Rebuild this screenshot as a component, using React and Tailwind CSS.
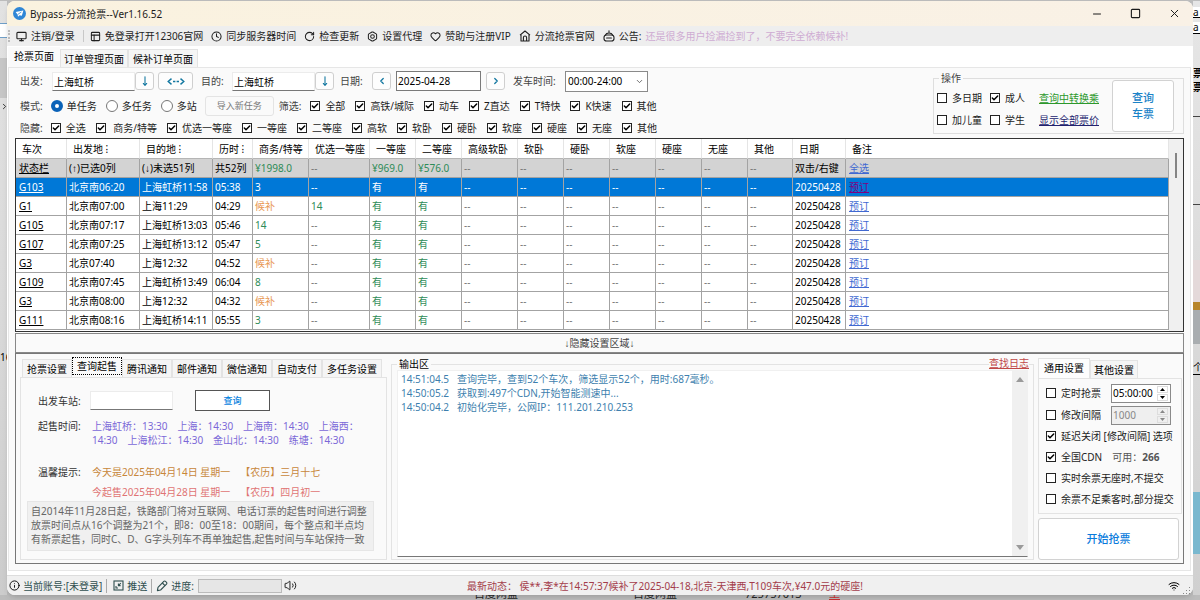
import React, { useState } from 'react';
import {
  Bolt,
  Check,
  ChevronDown,
  ChevronLeft,
  ChevronRight,
  Clock,
  Heart,
  Info,
  Minus,
  Monitor,
  MoveDown,
  PanelsTopLeft,
  RotateCw,
  Square,
  Volume2,
  Wifi,
  X
} from 'lucide-react';

const COLUMNS = [
  { name: '车次', width: 'w-[51px]' },
  { name: '出发地 ⁝', width: 'w-[73px]' },
  { name: '目的地 ⁝', width: 'w-[73px]' },
  { name: '历时 ⁝', width: 'w-[40px]' },
  { name: '商务/特等', width: 'w-[56px]' },
  { name: '优选一等座', width: 'w-[61px]' },
  { name: '一等座', width: 'w-[46px]' },
  { name: '二等座', width: 'w-[46px]' },
  { name: '高级软卧', width: 'w-[56px]' },
  { name: '软卧', width: 'w-[46px]' },
  { name: '硬卧', width: 'w-[46px]' },
  { name: '软座', width: 'w-[46px]' },
  { name: '硬座', width: 'w-[46px]' },
  { name: '无座', width: 'w-[46px]' },
  { name: '其他', width: 'w-[45px]' },
  { name: '日期', width: 'w-[53px]' },
  { name: '备注', width: '' }
];

const TRAINS = [
  ['状态栏', '(↑)已选0列', '(↓)未选51列', '共52列', '¥1998.0', '--', '¥969.0', '¥576.0'],
  ['G103', '北京南06:20', '上海虹桥11:58', '05:38', '3', '--', '有', '有'],
  ['G1', '北京南07:00', '上海11:29', '04:29', '候补', '14', '有', '有'],
  ['G105', '北京南07:17', '上海虹桥13:03', '05:46', '14', '--', '有', '有'],
  ['G107', '北京南07:25', '上海虹桥13:12', '05:47', '5', '--', '有', '有'],
  ['G3', '北京07:40', '上海12:32', '04:52', '候补', '--', '有', '有'],
  ['G109', '北京南07:45', '上海虹桥13:49', '06:04', '8', '--', '有', '有'],
  ['G3', '北京南08:00', '上海12:32', '04:32', '候补', '--', '有', '有'],
  ['G111', '北京南08:16', '上海虹桥14:11', '05:55', '3', '--', '有', '有']
];

const TRAIN_TYPES = ['全部', '高铁/城际', '动车', 'Z直达', 'T特快', 'K快速', '其他'];
const SEAT_TYPES = ['全选', ' 商务/特等', '优选一等座', '一等座', '二等座', '高软', '软卧', '硬卧', '软座', '硬座', '无座', '其他'];
const SETTING_TABS = ['抢票设置', '查询起售', '腾讯通知', '邮件通知', '微信通知', '自动支付', '多任务设置'];

const LOG = `14:51:04.5   查询完毕，查到52个车次，筛选显示52个，用时:687毫秒。
14:50:05.2   获取到:497个CDN,开始智能测速中...
14:50:04.2   初始化完毕，公网IP：111.201.210.253`;

const HomeIcon = () => (
  <svg className="h-3 w-3" viewBox="0 0 12 12" fill="none" stroke="currentColor" strokeWidth="1.1" strokeLinejoin="round">
    <path d="M1 5.2 6 1l5 4.2M2 4.6V11h8V4.6" />
    <path d="M4.4 11V7.6a1.6 1.6 0 0 1 3.2 0V11" />
  </svg>
);

const NoticeIcon = () => (
  <svg className="h-3 w-3" viewBox="0 0 12 12" fill="none" stroke="currentColor" strokeWidth="1.1" strokeLinecap="round">
    <path d="M6 .8v1.6M2.4 5a3.8 3 0 0 1 7.2 0" />
    <rect x="1" y="5" width="10" height="6" rx="2.6" />
    <path d="M3.6 8h4.8" />
  </svg>
);

const PushIcon = () => (
  <svg className="h-[11px] w-[11px]" viewBox="0 0 11 11" fill="none" stroke="currentColor" strokeWidth="1.1">
    <rect x="1" y="1" width="9" height="9" />
    <path d="M7.8 3.2 5.6 5.4M5.4 3.4v2.2h2.2" />
    <path d="M3 6v2h2" />
  </svg>
);

const PenIcon = () => (
  <svg className="h-3 w-3" viewBox="0 0 12 12" fill="none" stroke="currentColor" strokeWidth="1.1" strokeLinejoin="round">
    <path d="M1.4 10.6 2 7.4 7.8 1.4a1.2 1.2 0 0 1 1.7 0l1 1a1.2 1.2 0 0 1 0 1.7L4.6 10Z" />
    <path d="m6.4 3 2.6 2.6" />
  </svg>
);

const LogoIcon = () => (
  <svg className="h-[13px] w-[13px]" viewBox="0 0 13 13">
    <circle cx="6.5" cy="6.5" r="6.5" fill="#2f86d6" />
    <path d="M2.6 5 10.4 3.4 8.8 8.8 6.6 8.2 5 9.8 4.6 7.4Z" fill="#fff" />
    <path d="M4.8 7.4 8.4 5" stroke="#2f86d6" strokeWidth=".8" />
  </svg>
);

const SwapIcon = () => (
  <svg className="h-[7px] w-[18px]" viewBox="0 0 18 7" fill="none" stroke="currentColor" strokeWidth="1.4">
    <path d="M4.5.6 1.2 3.5l3.3 2.9M13.5.6l3.3 2.9-3.3 2.9M6 3.5h2.4M9.6 3.5H12" />
  </svg>
);

const CheckItem = ({ label, checked = false, className = '' }) => (
  <label className={`flex items-center gap-[5px] whitespace-pre ${className}`}>
    <span className="grid h-2.5 w-2.5 shrink-0 place-items-center">
      <input
        type="checkbox"
        defaultChecked={checked}
        className="peer col-start-1 row-start-1 h-2.5 w-2.5 appearance-none border border-[#222] bg-white"
      />
      <Check size={8} strokeWidth={4.5} className="pointer-events-none invisible col-start-1 row-start-1 text-black peer-checked:visible" />
    </span>
    {label}
  </label>
);

const RadioItem = ({ label, checked = false }) => (
  <label className="flex items-center gap-1 whitespace-nowrap text-[#1c1c1c]">
    <input
      type="radio"
      name="mode"
      defaultChecked={checked}
      className="h-3 w-3 appearance-none rounded-full border border-[#777] bg-white checked:border-4 checked:border-[#0a62b8]"
    />
    {label}
  </label>
);

const ToolItem = ({ icon, label }) => (
  <button className="flex items-center gap-1 whitespace-nowrap text-[#1f1f1f]">
    {icon}
    {label}
  </button>
);

const SmallButton = ({ children, label, wide = false }) => (
  <button
    aria-label={label}
    className={`flex h-[18px] items-center justify-center rounded-[3px] border border-[#cfcfcf] bg-[#fdfdfd] text-[#1277a0] ${wide ? 'w-[35px]' : 'w-[19px]'}`}
  >
    {children}
  </button>
);

const StationInput = ({ id }) => (
  <input
    id={id}
    defaultValue="上海虹桥"
    className="h-[19px] w-[83px] border border-[#ececec] border-b-[#777] bg-white px-px text-black outline-none"
  />
);

const Spinner = ({ id, value, disabled = false }) => (
  <div className={`flex h-[19px] w-[60px] items-center border border-[#8a8a8a] ${disabled ? 'bg-[#efefef] text-[#888]' : 'bg-white text-black'}`}>
    <input id={id} aria-label={id} defaultValue={value} disabled={disabled} className="w-0 flex-1 pl-px outline-none" />
    <div className="flex w-[13px] flex-col gap-px pr-0.5">
      {['M0 3 2.5 0 5 3Z', 'M0 0 2.5 3 5 0Z'].map((d) => (
        <button key={d} aria-label="调整" disabled={disabled} className="flex h-[7px] items-center justify-center border border-[#ddd]">
          <svg className="h-[3px] w-[5px]" viewBox="0 0 5 3" fill="currentColor"><path d={d} /></svg>
        </button>
      ))}
    </div>
  </div>
);

const TitleBar = () => (
  <header className="flex h-[25px] items-center rounded-t-lg bg-gradient-to-r from-[#faf2df] to-[#f9f1e6] pl-1.5 text-[#1a1a1a]">
    <LogoIcon />
    <h1 className="flex-1 pl-1">Bypass-分流抢票--Ver1.16.52</h1>
    <div className="flex items-center gap-[27px] pr-3">
      <button aria-label="最小化"><Minus size={12} strokeWidth={2} /></button>
      <button aria-label="最大化"><Square size={11} strokeWidth={2.4} /></button>
      <button aria-label="关闭"><X size={13} strokeWidth={1.8} /></button>
    </div>
  </header>
);

const Toolbar = () => (
  <nav className="flex h-5 items-center gap-2 bg-[#eeeeee] pl-px">
    <span className="-mr-0.5 h-3 w-0.5 border-l-2 border-dotted border-[#bbb]" />
    <ToolItem icon={<Monitor size={11} strokeWidth={2.4} />} label="注销/登录" />
    <span className="-mr-0.5 h-3 w-px bg-[#c8c8c8]" />
    <ToolItem icon={<PanelsTopLeft size={11} strokeWidth={2.2} />} label="免登录打开12306官网" />
    <ToolItem icon={<Clock size={11} strokeWidth={2.2} />} label="同步服务器时间" />
    <ToolItem icon={<RotateCw size={11} strokeWidth={2.2} />} label="检查更新" />
    <ToolItem icon={<Bolt size={11} strokeWidth={2.2} />} label="设置代理" />
    <ToolItem icon={<Heart size={11} strokeWidth={2.2} />} label="赞助与注册VIP" />
    <ToolItem icon={<HomeIcon />} label="分流抢票官网" />
    <ToolItem icon={<NoticeIcon />} label="公告:" />
    <span className="-ml-1 whitespace-nowrap text-[#cfacd3]">还是很多用户捡漏捡到了，不要完全依赖候补!</span>
  </nav>
);

const SearchPanel = () => (
  <div className="flex justify-between text-[#444]">
    <div className="pl-[5px] pt-0.5">
      <div className="flex h-[22px] items-center">
        <label htmlFor="from" className="w-8">出发:</label>
        <StationInput id="from" />
        <SmallButton label="选择出发站"><MoveDown size={10} strokeWidth={2.6} /></SmallButton>
        <div className="px-1"><SmallButton wide label="交换"><SwapIcon /></SmallButton></div>
        <label htmlFor="to" className="w-[35px] pl-1">目的:</label>
        <StationInput id="to" />
        <SmallButton label="选择到达站"><MoveDown size={10} strokeWidth={2.6} /></SmallButton>
        <label htmlFor="date" className="w-[38px] pl-1.5">日期:</label>
        <SmallButton label="前一天"><ChevronLeft size={10} strokeWidth={3} /></SmallButton>
        <input
          id="date"
          defaultValue="2025-04-28"
          className="mx-[5px] h-5 w-[85px] border border-[#7a7a7a] bg-white px-px text-black outline-none"
        />
        <SmallButton label="后一天"><ChevronRight size={10} strokeWidth={3} /></SmallButton>
        <label htmlFor="time" className="w-[60px] pl-2">发车时间:</label>
        <div className="grid items-center">
          <select id="time" className="col-start-1 row-start-1 h-[21px] w-[83px] appearance-none border border-[#8a8a8a] bg-white px-0.5 text-black outline-none">
            <option>00:00-24:00</option>
          </select>
          <ChevronDown size={9} className="pointer-events-none col-start-1 row-start-1 mr-1 justify-self-end" />
        </div>
      </div>
      <div className="mt-1 flex h-5 items-center gap-[9px]">
        <span className="-mr-px">模式:</span>
        <RadioItem label="单任务" checked />
        <RadioItem label="多任务" />
        <RadioItem label="多站" />
        <button className="-ml-px h-5 w-[69px] rounded-[3px] border border-[#e4e4e4] text-[9px] text-[#777]">导入新任务</button>
        <span className="-ml-1">筛选:</span>
        <div className="flex items-center gap-2.5 text-[#1c1c1c]">
          {TRAIN_TYPES.map((type) => <CheckItem key={type} label={type} checked />)}
        </div>
      </div>
      <div className="mt-1 flex h-4 items-center gap-2">
        <span>隐藏:</span>
        <div className="flex items-center gap-2.5 text-[#1c1c1c]">
          {SEAT_TYPES.map((type) => <CheckItem key={type} label={type} checked />)}
        </div>
      </div>
    </div>

    <fieldset className="mt-1 h-[62px] border border-[#dedede] pl-[3px] pr-[9px] leading-3">
      <legend className="ml-0.5 px-0.5">操作</legend>
      <div className="-mt-1 flex items-center gap-[13px]">
        <div className="grid grid-cols-[auto_auto_auto] gap-x-2 gap-y-2.5 pt-1.5 text-[#1c1c1c]">
          <CheckItem label="多日期" />
          <CheckItem label="成人" checked />
          <a href="#transfer" className="ml-1.5 text-[#2c982c] underline">查询中转换乘</a>
          <CheckItem label="加儿童" />
          <CheckItem label="学生" />
          <a href="#price" className="ml-1.5 text-[#22226e] underline">显示全部票价</a>
        </div>
        <button className="h-[52px] w-[62px] rounded-[3px] border border-[#d2d2d2] bg-white px-4 text-[11px] font-medium leading-4 text-[#1b83c8]">
          查询 车票
        </button>
      </div>
    </fieldset>
  </div>
);

const seatColor = (value) => {
  if (value === '--') return 'text-[#777]';
  if (value === '候补') return 'text-[#e8964f]';
  return 'text-[#2e8b57]';
};

const rowStyle = (index, selected) => {
  if (index === selected) return 'bg-[#0078d7] text-white';
  return index === 0 ? 'bg-[#d3d3d3]' : 'bg-white';
};

const TrainTable = () => {
  const [selected, setSelected] = useState(1);

  return (
    <div className="flex border border-[#333] bg-white">
      <table className="mb-px w-0 flex-1 table-fixed border-separate border-spacing-0 text-black">
        <thead>
          <tr className="h-5">
            {COLUMNS.map((column) => (
              <th key={column.name} className={`${column.width} whitespace-nowrap border-b border-r border-b-[#b5b5b5] border-r-[#e5e5e5] p-0 pl-1.5 text-left font-normal`}>
                {column.name}
              </th>
            ))}
          </tr>
        </thead>
        <tbody>
          {TRAINS.map((train, index) => {
            const cells = [...train.slice(1), '--', '--', '--', '--', '--', '--', '--', index === 0 ? '双击/右键' : '20250428'];
            return (
              <tr key={index} onClick={() => setSelected(index)} className={`h-[19px] ${rowStyle(index, selected)}`}>
                <td className="border-b border-r border-[#a3a3a3] p-0 pl-[3px]">
                  <a href="#train" className="underline">{train[0]}</a>
                </td>
                {cells.map((cell, i) => (
                  <td
                    key={i}
                    className={`whitespace-nowrap border-b border-r border-[#a3a3a3] p-0 pl-0.5 ${i > 2 && i < 14 && index !== selected ? seatColor(cell) : ''}`}
                  >
                    {cell}
                  </td>
                ))}
                <td className="border-b border-r border-[#a3a3a3] p-0 pl-[3px]">
                  <a href="#book" className={`underline ${index === selected ? 'text-[#800080]' : 'text-[#4169d1]'}`}>
                    {index === 0 ? '全选' : '预订'}
                  </a>
                </td>
              </tr>
            );
          })}
        </tbody>
      </table>
      <div className="flex w-[14px] justify-center bg-[#f0f0f0] pt-3.5">
        <span className="h-[25px] w-0.5 bg-[#858585]" />
      </div>
    </div>
  );
};

const SalePanel = () => (
  <section className="flex w-[367px] shrink-0 flex-col">
    <div className="flex h-[19px] items-end pl-0.5">
      {SETTING_TABS.map((tab) => (
        <button
          key={tab}
          className={tab === '查询起售'
            ? 'mb-0.5 h-[18px] border border-dotted border-black bg-[#fafafa] px-1 leading-4'
            : 'h-[18px] border border-b-0 border-[#e3e3e3] bg-[#f5f5f5] px-1'}
        >
          {tab}
        </button>
      ))}
    </div>
    <div className="flex-1 border border-[#e3e3e3] px-1.5 text-[#333]">
      <div className="flex h-[41px] items-center pl-[11px] pt-1">
        <label htmlFor="station" className="w-[52px]">出发车站:</label>
        <input id="station" className="h-[19px] w-[83px] border border-[#ececec] border-b-[#777] bg-white px-0.5 outline-none" />
        <button className="ml-[22px] h-[21px] w-[75px] border border-[#555] bg-white text-[9px] font-medium text-[#0a84e0]">查询</button>
      </div>
      <dl className="grid grid-cols-[54px_270px] pl-[11px] leading-[14px]">
        <dt className="pb-8">起售时间:</dt>
        <dd className="text-[#7b68d8]">上海虹桥：13:30　上海：14:30　上海南：14:30　上海西：14:30　上海松江：14:30　金山北：14:30　练塘：14:30</dd>
        <dt>温馨提示:</dt>
        <dd className="text-[#c8873a]">今天是2025年04月14日 星期一　【农历】三月十七</dd>
        <dd className="col-start-2 pt-1.5 text-[#e07474]">今起售2025年04月28日 星期一　【农历】四月初一</dd>
      </dl>
      <p className="mr-1.5 mt-0.5 whitespace-nowrap border border-[#e6e6e6] bg-[#f0f0f0] px-[3px] pb-1 pt-0.5 leading-[14px] text-[#666]">
        自2014年11月28日起，铁路部门将对互联网、电话订票的起售时间进行调整<br />
        放票时间点从16个调整为21个，即8：00至18：00期间，每个整点和半点均<br />
        有新票起售，同时C、D、G字头列车不再单独起售,起售时间与车站保持一致
      </p>
    </div>
  </section>
);

const OutputPanel = () => (
  <fieldset className="relative flex min-w-0 flex-1 flex-col border border-[#e3e3e3] px-[5px] pb-0.5">
    <legend className="px-0.5 leading-3 text-black">输出区</legend>
    <a href="#log" className="absolute -top-3.5 right-1 bg-[#fafafa] text-[#c04848] underline">查找日志</a>
    <div className="flex h-[188px] border border-[#f0f0f0] border-b-[#777] bg-white">
      <textarea
        readOnly
        aria-label="输出区"
        value={LOG}
        className="flex-1 resize-none overflow-hidden pl-[3px] pt-px leading-[14px] text-[#3e7fae] outline-none"
      />
      <div className="flex w-[15px] flex-col items-center justify-between bg-[#f0f0f0] py-1.5 text-[#9a9a9a]">
        <svg className="h-[5px] w-2" viewBox="0 0 8 5" fill="currentColor"><path d="M0 5 4 0l4 5Z" /></svg>
        <svg className="h-[5px] w-2" viewBox="0 0 8 5" fill="currentColor"><path d="M0 0l4 5 4-5Z" /></svg>
      </div>
    </div>
  </fieldset>
);

const OptionsPanel = () => (
  <aside className="flex w-36 shrink-0 flex-col">
    <div className="flex h-5 items-end">
      <button className="h-5 border border-b-0 border-[#e3e3e3] bg-[#fdfdfd] px-[5px] pb-0.5">通用设置</button>
      <button className="h-[18px] border border-b-0 border-[#e3e3e3] bg-[#f5f5f5] px-[3px]">其他设置</button>
    </div>
    <div className="border border-[#e3e3e3] pb-1 pl-[7px] pt-[3px] text-[#1c1c1c]">
      <div className="flex h-[22px] items-center justify-between pr-2.5">
        <CheckItem label="定时抢票" />
        <Spinner id="定时" value="05:00:00" />
      </div>
      <div className="flex h-[22px] items-center justify-between pr-2.5">
        <CheckItem label="修改间隔" />
        <Spinner id="间隔" value="1000" disabled />
      </div>
      <CheckItem label="延迟关闭 [修改间隔] 选项" checked className="h-5" />
      <div className="flex items-center gap-2.5">
        <CheckItem label="全国CDN" checked className="h-[22px]" />
        <span className="text-[#555]">可用：<b>266</b></span>
      </div>
      <CheckItem label="实时余票无座时,不提交" className="h-5" />
      <CheckItem label="余票不足乘客时,部分提交" className="h-[21px]" />
    </div>
    <button className="mr-[3px] mt-1 h-[42px] rounded-[3px] border border-[#d2d2d2] bg-white text-[11px] font-medium text-[#0a7bdc]">开始抢票</button>
  </aside>
);

const StatusBar = () => (
  <footer className="flex h-5 items-center rounded-b-lg border-t border-[#ddd] bg-[#f0f0f0] pl-0.5 text-[#2f4f4f]">
    <div className="flex w-[458px] shrink-0 items-center gap-1 whitespace-nowrap">
      <Info size={11} className="text-black" />
      <span className="-ml-px">当前账号:[未登录]</span>
      <span className="mr-0.5 h-3.5 w-px bg-[#aaa]" />
      <PushIcon />
      <span className="-ml-px">推送</span>
      <span className="h-3.5 w-px bg-[#aaa]" />
      <PenIcon />
      <label htmlFor="progress" className="-ml-px">进度:</label>
      <progress id="progress" value="0" max="100" className="h-3.5 w-[84px] appearance-none border border-[#bbb] bg-[#e6e6e6] [&::-webkit-progress-bar]:bg-[#e6e6e6]" />
      <Volume2 size={13} strokeWidth={1.6} className="-ml-0.5 text-black" />
    </div>
    <p className="flex-1 whitespace-nowrap text-[#a33c4a]">最新动态： 侯**,李*在14:57:37候补了2025-04-18,北京-天津西,T109车次,¥47.0元的硬座!</p>
    <Wifi size={12} className="text-black" />
    <svg className="ml-0.5 mr-0.5 h-[9px] w-[9px] self-end" viewBox="0 0 9 9" fill="#888">
      <path d="M7 1h1v1H7zM4 4h1v1H4zM7 4h1v1H7zM1 7h1v1H1zM4 7h1v1H4zM7 7h1v1H7z" />
    </svg>
  </footer>
);

const App = () => (
  <div
    lang="zh-CN"
    className="flex min-h-screen flex-col bg-[#bcbcbc] pt-px font-['Noto_Sans','Liberation_Sans','Noto_Sans_CJK_SC',sans-serif] text-[10px] leading-[14px] [text-spacing-trim:space-all]"
  >
    <div className="flex">
      <div className="w-[7px] shrink-0 overflow-hidden bg-gradient-to-b from-[#e2e2e2] via-[#dadada] to-[#cccccc]">
        <div className="mt-[22px] h-[15px] border-y border-[#6f9fc8] bg-white" />
        <div className="mt-5 h-10 bg-[#c6c6c6]" />
        <ChevronRight size={9} className="mt-1" />
        <div className="mt-[239px] text-black">16</div>
      </div>

      <div className="min-w-0 flex-1 rounded-lg bg-white shadow-md">
        <TitleBar />
        <Toolbar />
        <div className="flex h-[21px] items-end pl-px text-black">
          <button className="h-5 bg-[#fafafa] px-1.5 pb-0.5">抢票页面</button>
          <button className="h-[18px] border border-b-0 border-[#e3e3e3] bg-[#f5f5f5] px-[3px]">订单管理页面</button>
          <button className="h-[18px] border border-b-0 border-[#e3e3e3] bg-[#f5f5f5] px-1">候补订单页面</button>
        </div>

        <main className="mb-1 ml-px mr-0.5 border border-[#e6e6e6] bg-[#fafafa] px-1.5 pb-1.5">
          <div className="h-[70px]"><SearchPanel /></div>
          <TrainTable />
          <button className="mt-px block h-5 w-full border border-[#888] text-[#444]">↓隐藏设置区域↓</button>
          <div className="flex h-[211px] gap-1 border border-[#777] p-1 pb-[3px] pr-px">
            <SalePanel />
            <OutputPanel />
            <OptionsPanel />
          </div>
        </main>

        <StatusBar />
      </div>

      <div className="flex w-[7px] shrink-0 flex-col overflow-hidden bg-gradient-to-b from-[#e6e6e6] to-[#d0d0d0] text-black">
        <div className="mt-1.5 h-[11px] border-b border-black bg-white leading-[11px]">a</div>
        <div className="mt-1 h-3 border-b border-black bg-white leading-[11px]">a</div>
        <div className="mt-8 font-bold">票票</div>
        <div className="mt-[22px] h-[89px] border-y border-[#444]" />
        <div className="mt-[55px] h-[42px] bg-[#e4d9da]" />
        <div className="h-2 bg-[#b8862c]" />
        <div className="h-[34px] bg-[#a9adb0]" />
        <div className="mt-4 border-b border-black">个</div>
        <div className="mt-[117px] h-[62px] bg-[#79b8cf]" />
      </div>
    </div>

    <div className="flex h-1.5 items-end overflow-hidden text-[11px] leading-[14px] text-[#222]">
      <span className="w-[474px] shrink-0" />
      <span className="w-[159px] shrink-0">百度网盘</span>
      <span className="w-[112px] shrink-0">百度网盘</span>
      <span className="w-[84px] shrink-0">725757013</span>
      <span className="text-[#c03030] underline">工</span>
    </div>
  </div>
);

export default App;
